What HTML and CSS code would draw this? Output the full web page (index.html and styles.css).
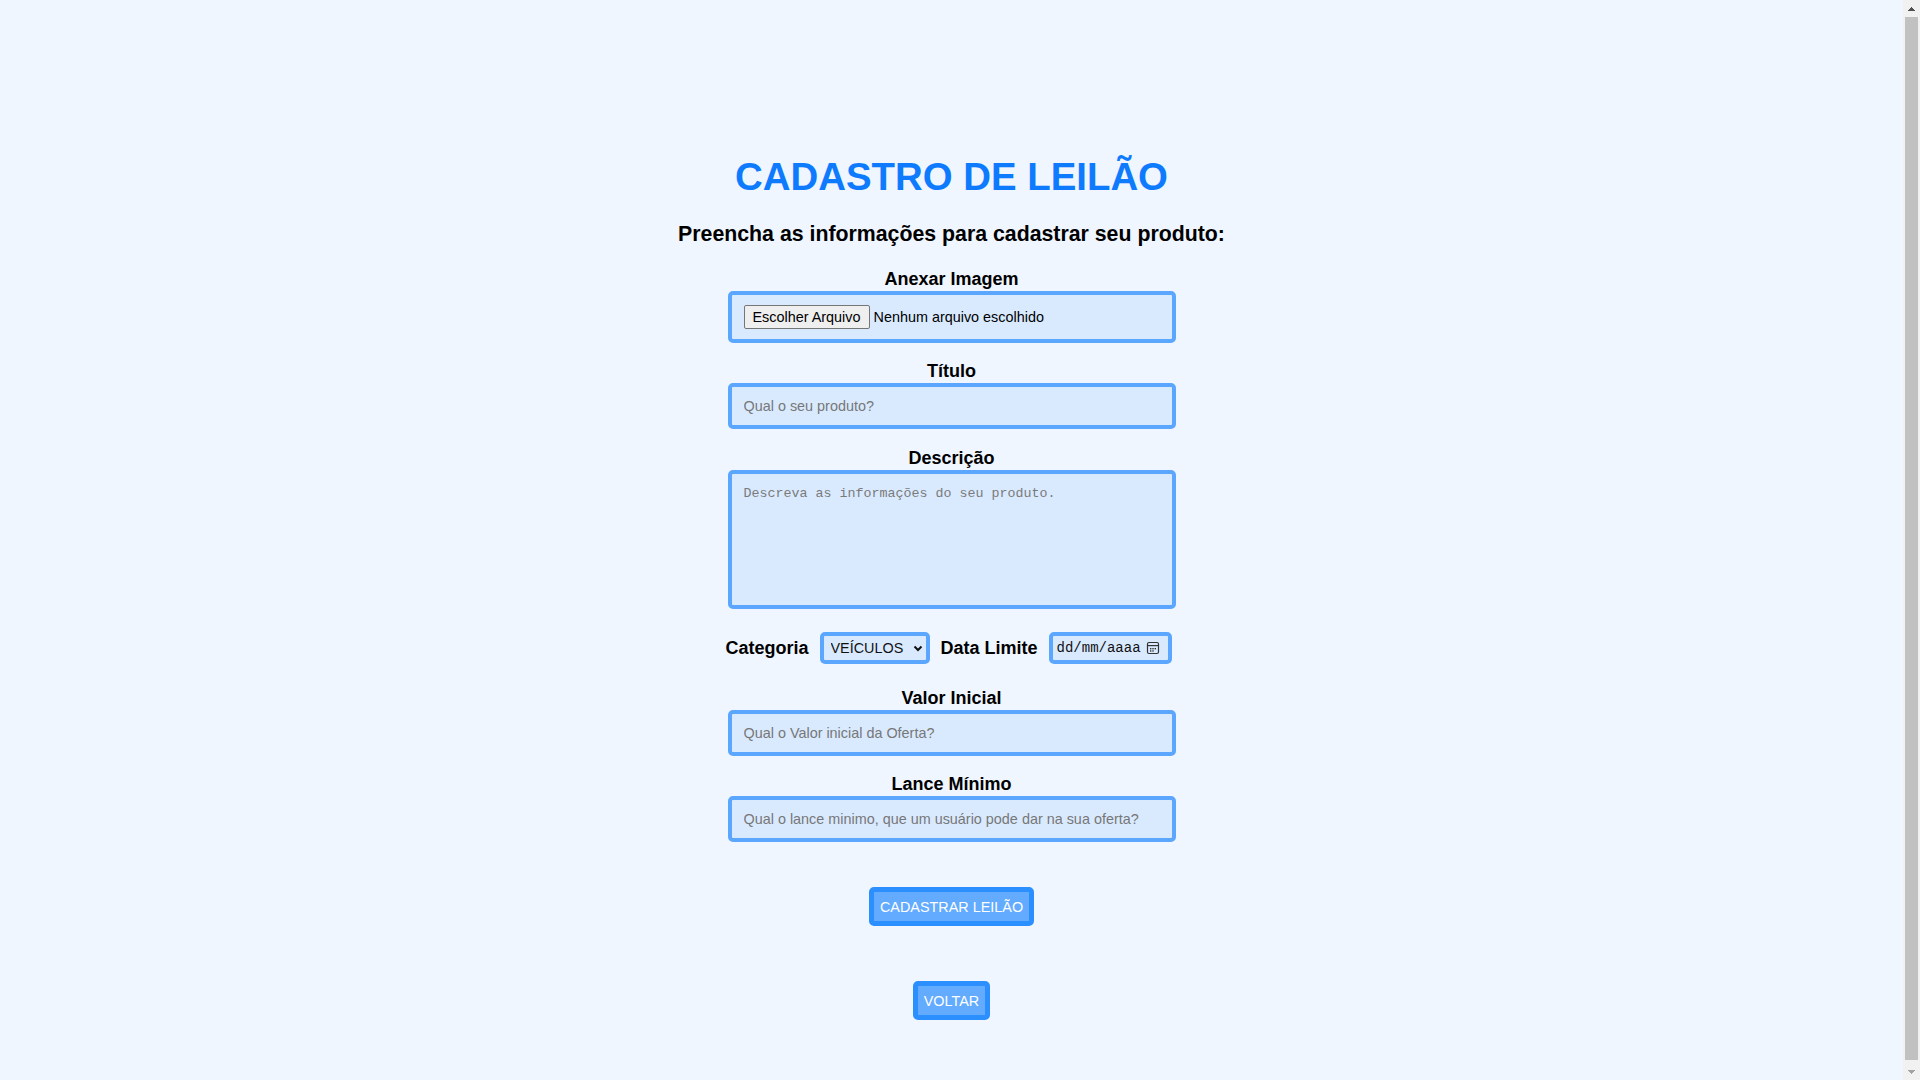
FILE: index.html
```html
<!DOCTYPE html>
<html lang="pt-BR">
<head>
<meta charset="UTF-8">
<title>Cadastro de Leilão</title>
<link rel="stylesheet" href="styles.css">
</head>
<body>
<main class="page">
  <h1 class="title">CADASTRO DE LEILÃO</h1>
  <h2 class="subtitle">Preencha as informações para cadastrar seu produto:</h2>
  <form class="form">
    <div class="field">
      <label class="field-label">Anexar Imagem</label>
      <div class="file-box"><span class="file-btn">Escolher Arquivo</span><span class="file-text">Nenhum arquivo escolhido</span></div>
    </div>
    <div class="field">
      <label class="field-label" for="titulo">Título</label>
      <input class="text-input" id="titulo" type="text" placeholder="Qual o seu produto?">
    </div>
    <div class="field field-desc">
      <label class="field-label" for="descricao">Descrição</label>
      <textarea class="textarea" id="descricao" placeholder="Descreva as informações do seu produto."></textarea>
    </div>
    <div class="inline-row">
      <label class="field-label">Categoria</label>
      <div class="select-wrap">
        <select class="select"><option>VEÍCULOS</option></select>
        <svg class="chevron" width="10" height="7" viewBox="0 0 10 7"><path d="M1.5 1.5 L5 5 L8.5 1.5" fill="none" stroke="#111" stroke-width="2"/></svg>
      </div>
      <label class="field-label">Data Limite</label>
      <div class="date-box">
        <span class="date-text">dd/mm/aaaa</span>
        <svg class="cal-icon" width="14" height="14" viewBox="0 0 14 14">
          <rect x="1.5" y="1.5" width="11" height="11" rx="1.5" fill="none" stroke="#333" stroke-width="1.2"/>
          <line x1="1.5" y1="4.6" x2="12.5" y2="4.6" stroke="#333" stroke-width="1.2"/>
          <rect x="4" y="7" width="1.4" height="1.4" fill="#333"/>
          <rect x="6.3" y="7" width="1.4" height="1.4" fill="#333"/>
          <rect x="8.6" y="7" width="1.4" height="1.4" fill="#333"/>
          <rect x="4" y="9.3" width="1.4" height="1.4" fill="#333"/>
          <rect x="6.3" y="9.3" width="1.4" height="1.4" fill="#333"/>
        </svg>
      </div>
    </div>
    <div class="field">
      <label class="field-label" for="valor">Valor Inicial</label>
      <input class="text-input" id="valor" type="text" placeholder="Qual o Valor inicial da Oferta?">
    </div>
    <div class="field">
      <label class="field-label" for="lance">Lance Mínimo</label>
      <input class="text-input" id="lance" type="text" placeholder="Qual o lance minimo, que um usuário pode dar na sua oferta?">
    </div>
    <button class="btn btn-submit" type="button">CADASTRAR LEILÃO</button>
    <button class="btn btn-back" type="button">VOLTAR</button>
  </form>
</main>
<div class="scrollbar" aria-hidden="true">
  <div class="sb-arrow sb-up"></div>
  <div class="sb-track"><div class="sb-thumb"></div></div>
  <div class="sb-arrow sb-down"></div>
</div>
</body>
</html>
```
FILE: styles.css
```css
html, body {
  margin: 0;
}

body {
  background: #eff6ff;
  font-family: "Liberation Sans", Arial, sans-serif;
  color: #000;
}

.page {
  display: flex;
  flex-direction: column;
  align-items: center;
  padding: 155px 0 66px;
  margin-right: 17px;
}

.title {
  margin: 0;
  font-size: 38.4px;
  line-height: 44px;
  font-weight: 700;
  color: #0e7bff;
}

.subtitle {
  margin: 23px 0 0;
  font-size: 21.3px;
  line-height: 24px;
  font-weight: 700;
}

.form {
  margin-top: 21px;
  display: flex;
  flex-direction: column;
  align-items: center;
  gap: 16px;
}

.field {
  display: flex;
  flex-direction: column;
  align-items: center;
  width: 448px;
}

.field-desc {
  margin-top: 1px;
}

.field-label {
  font-size: 18px;
  line-height: 24px;
  font-weight: 700;
}

.file-box,
.text-input,
.textarea,
.select,
.date-box {
  box-sizing: border-box;
  border: 4px solid #5ba7ff;
  border-radius: 5px;
  background: #d9eaff;
}

.file-box {
  width: 448px;
  height: 52px;
  padding: 10px 12px;
  display: flex;
  align-items: center;
  font-size: 14.4px;
}

.file-btn {
  box-sizing: border-box;
  height: 24px;
  display: inline-flex;
  align-items: center;
  padding: 0 8px;
  background: #efefef;
  border: 1px solid #767676;
  border-radius: 2px;
  color: #000;
  margin-right: 4px;
}

.file-text {
  color: #000;
}

.text-input {
  width: 448px;
  height: 46px;
  padding: 0 12px;
  font-family: "Liberation Sans", Arial, sans-serif;
  font-size: 14.4px;
  color: #000;
  outline: none;
}

.text-input::placeholder {
  color: #777;
}

.textarea {
  width: 448px;
  height: 139px;
  padding: 12px 12px;
  font-family: "Liberation Mono", "Courier New", monospace;
  font-size: 13.33px;
  resize: none;
  outline: none;
  display: block;
}

.textarea::placeholder {
  color: #7a7a7a;
}

.inline-row {
  display: flex;
  align-items: center;
  gap: 11px;
  min-height: 45px;
  padding-right: 6px;
}

.select-wrap {
  position: relative;
  display: flex;
}

.select {
  appearance: none;
  -webkit-appearance: none;
  width: 110px;
  height: 32px;
  padding: 0 20px 0 7px;
  font-family: "Liberation Sans", Arial, sans-serif;
  font-size: 14.4px;
  color: #111;
  outline: none;
}

.chevron {
  position: absolute;
  right: 7px;
  top: 13px;
  pointer-events: none;
}

.date-box {
  width: 123px;
  height: 32px;
  padding: 0 8px 0 4px;
  display: flex;
  align-items: center;
  justify-content: space-between;
  font-family: "Liberation Mono", "Courier New", monospace;
  font-size: 14px;
  color: #111;
}

.cal-icon {
  display: block;
}

.btn {
  box-sizing: border-box;
  height: 39px;
  padding: 0 6px;
  border: 5px solid #2b8fff;
  border-radius: 5px;
  background: #63abff;
  color: #fff;
  font-family: "Liberation Sans", Arial, sans-serif;
  font-size: 14.4px;
  cursor: pointer;
}

.btn-submit {
  margin-top: 29px;
}

.btn-back {
  margin-top: 39px;
}

/* classic scrollbar drawn over the right edge of the window */
.scrollbar {
  position: fixed;
  top: 0;
  right: 0;
  width: 17px;
  height: 100vh;
  background: #f1f1f1;
  display: flex;
  flex-direction: column;
}

.sb-arrow {
  height: 17px;
  flex: none;
  background-repeat: no-repeat;
  background-position: center;
  background-size: 7px 4px;
}

.sb-up {
  background-image: conic-gradient(from 135deg at 50% 0, #505050 0 90deg, transparent 0);
}

.sb-down {
  background-image: conic-gradient(from -45deg at 50% 100%, #a3a3a3 0 90deg, transparent 0);
}

.sb-track {
  flex: 1;
  padding: 0 2px 3px;
  display: flex;
}

.sb-thumb {
  flex: 1;
  background: #c1c1c1;
}
```
